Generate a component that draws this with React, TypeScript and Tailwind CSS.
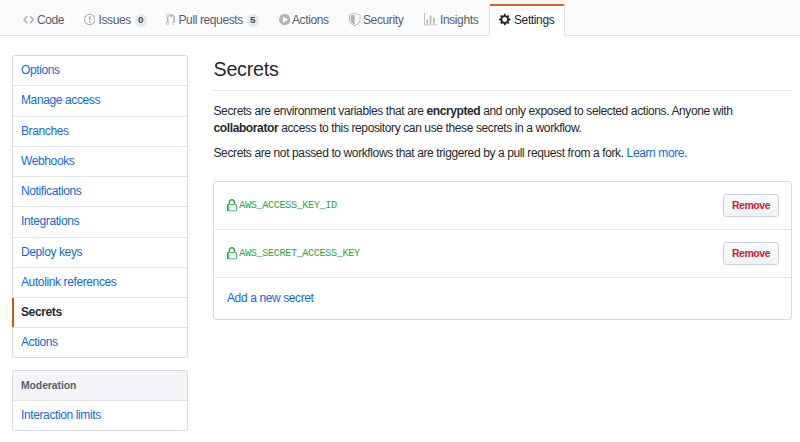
import type { ReactNode } from 'react';

type IconProps = { d: string; w: number; className?: string };

// Octicons share a 16-unit height and vary in width.
function Icon({ d, w, className = '' }: IconProps) {
  return (
    <svg viewBox={`0 0 ${w} 16`} fill="currentColor" fillRule="evenodd" aria-hidden="true" className={`h-[13.1px] shrink-0 ${className}`}>
      <path d={d} />
    </svg>
  );
}

const icons = {
  code: 'M9.5 3L8 4.5 11.5 8 8 11.5 9.5 13 14 8 9.5 3zm-5 0L0 8l4.5 5L6 11.5 2.5 8 6 4.5 4.5 3z',
  issue: 'M7 2.3c3.14 0 5.7 2.56 5.7 5.7s-2.56 5.7-5.7 5.7A5.71 5.71 0 011.3 8c0-3.14 2.56-5.7 5.7-5.7zM7 1C3.14 1 0 4.14 0 8s3.14 7 7 7 7-3.14 7-7-3.14-7-7-7zm1 3H6v5h2V4zm0 6H6v2h2v-2z',
  pull: 'M11 11.28V5c-.03-.78-.34-1.47-.94-2.06C9.46 2.35 8.78 2.03 8 2H7V0L4 3l3 3V4h1c.27.02.48.11.69.31.21.2.3.42.31.69v6.28A1.993 1.993 0 0010 15a1.993 1.993 0 001-3.72zm-1 2.92c-.66 0-1.2-.55-1.2-1.2 0-.65.55-1.2 1.2-1.2.65 0 1.2.55 1.2 1.2 0 .65-.55 1.2-1.2 1.2zM4 3c0-1.11-.89-2-2-2a1.993 1.993 0 00-1 3.72v6.56A1.993 1.993 0 002 15a1.993 1.993 0 001-3.72V4.72c.59-.34 1-.98 1-1.72zm-.8 10c0 .66-.55 1.2-1.2 1.2-.65 0-1.2-.55-1.2-1.2 0-.65.55-1.2 1.2-1.2.65 0 1.2.55 1.2 1.2zM2 4.2C1.34 4.2.8 3.65.8 3c0-.65.55-1.2 1.2-1.2.65 0 1.2.55 1.2 1.2 0 .65-.55 1.2-1.2 1.2z',
  play: 'M14 8A7 7 0 110 8a7 7 0 0114 0zm-8.223 3.482l4.599-3.066a.5.5 0 000-.832L5.777 4.518A.5.5 0 005 4.934v6.132a.5.5 0 00.777.416z',
  shield: 'M0 2l7-2 7 2v6.02C14 12.69 8.69 16 7 16c-1.69 0-7-3.31-7-7.98V2zm1 .75L7 1l6 1.75v5.268C13 12.104 8.449 15 7 15c-1.449 0-6-2.896-6-6.982V2.75zm1 .75L7 2v12c-1.207 0-5-2.482-5-5.985V3.5z',
  graph: 'M16 14v1H0V0h1v14h15zM5 13H3V8h2v5zm4 0H7V3h2v10zm4 0h-2V6h2v7z',
  gear: 'M14 8.77v-1.6l-1.94-.64-.45-1.09.88-1.84-1.13-1.13-1.81.91-1.09-.45-.69-1.92h-1.6l-.63 1.94-1.11.45-1.84-.88-1.13 1.13.91 1.81-.45 1.09L0 7.23v1.59l1.94.64.45 1.09-.88 1.84 1.13 1.13 1.81-.91 1.09.45.69 1.92h1.59l.63-1.94 1.11-.45 1.84.88 1.13-1.13-.92-1.81.47-1.09L14 8.75v.02zM7 11c-1.66 0-3-1.34-3-3s1.34-3 3-3 3 1.34 3 3-1.34 3-3 3z',
  lock: 'M4 13H3v-1h1v1zm8-6v7c0 .55-.45 1-1 1H1c-.55 0-1-.45-1-1V7c0-.55.45-1 1-1h1V4c0-2.2 1.8-4 4-4s4 1.8 4 4v2h1c.55 0 1 .45 1 1zM3.8 6h4.41V4c0-1.22-.98-2.2-2.2-2.2-1.22 0-2.2.98-2.2 2.2v2H3.8zM11 7H2v7h9V7zM4 8H3v1h1V8zm0 2H3v1h1v-1z',
};

const tabs = [
  { label: 'Code', d: icons.code, w: 14, width: 'w-[61px]', icon: 'w-[11.5px] mr-[3px]' },
  { label: 'Issues', d: icons.issue, w: 14, width: 'w-[82px]', icon: 'w-[11.5px] mr-[3.5px]', count: 0 },
  { label: 'Pull requests', d: icons.pull, w: 12, width: 'w-[113px]', icon: 'w-[9.8px] mr-[3.2px]', count: 5 },
  { label: 'Actions', d: icons.play, w: 14, width: 'w-[70.5px]', icon: 'w-[11.5px] mr-[2px]' },
  { label: 'Security', d: icons.shield, w: 14, width: 'w-[75px]', icon: 'w-[11.5px] mr-[2.5px]' },
  { label: 'Insights', d: icons.graph, w: 16, width: 'w-[65px]', icon: 'w-[13.1px] mr-[2.9px]' },
];

const menu = ['Options', 'Manage access', 'Branches', 'Webhooks', 'Notifications', 'Integrations', 'Deploy keys', 'Autolink references', 'Secrets', 'Actions'];

const secrets = ['AWS_ACCESS_KEY_ID', 'AWS_SECRET_ACCESS_KEY'];

function MenuLink({ children, active = false }: { children: ReactNode; active?: boolean }) {
  return (
    <a
      className={
        active
          ? '-ml-px flex h-full items-center border-l-2 border-[#d15704] pl-[7px] font-bold text-[#24292e]'
          : 'flex h-full items-center pl-2 text-[#106ad8]'
      }
    >
      {children}
    </a>
  );
}

export default function App() {
  return (
    <div className="h-[442px] overflow-hidden bg-white font-['Liberation_Sans',Arial,sans-serif] text-[12px] leading-[17px] tracking-[-0.385px] text-[#24292e]">
      <header className="flex h-9 items-end border-b border-[#e1e4e8] bg-[#fafbfc] pl-[22.5px]">
        {tabs.map((t) => (
          <a key={t.label} className={`flex h-[30px] shrink-0 items-center text-[#586069] ${t.width}`}>
            <Icon d={t.d} w={t.w} className={`text-[#b1b4b8] ${t.icon}`} />
            {t.label}
            {t.count !== undefined && (
              <span className="ml-[3.8px] flex h-[13px] w-3 items-center justify-center rounded-full bg-[#e6e8eb] text-[9.8px] leading-none font-bold tracking-normal text-[#444d56]">
                {t.count}
              </span>
            )}
          </a>
        ))}
        <a className="-mb-px flex h-8 w-[76px] shrink-0 items-center rounded-t-[2px] border-x border-t-2 border-x-[#e1e4e8] border-t-[#e36209] bg-white pb-0.5 pl-[9px]">
          <Icon d={icons.gear} w={14} className="mr-[3.5px] w-[11.5px]" />
          Settings
        </a>
      </header>

      <div className="flex pl-3 pr-2">
        <aside className="w-44 shrink-0 pt-[19px]">
          <nav className="rounded-[3px] border border-[#d8dbdf]">
            {menu.map((m) => (
              <div key={m} className="h-[30.25px] border-b border-[#e1e4e8] last:h-[29px] last:border-b-0">
                <MenuLink active={m === 'Secrets'}>{m}</MenuLink>
              </div>
            ))}
          </nav>
          <nav className="mt-3 overflow-hidden rounded-[3px] border border-[#d8dbdf]">
            <h3 className="flex h-[30px] items-center border-b border-[#e1e4e8] bg-[#f3f5f8] pl-2 text-[10.4px] font-bold tracking-[-0.07px] text-[#586069]">Moderation</h3>
            <div className="h-[29px]">
              <MenuLink>Interaction limits</MenuLink>
            </div>
          </nav>
        </aside>

        <main className="ml-[25px] flex-1 pt-[19px]">
          <h2 className="h-9 border-b border-[#e1e4e8] pl-[0.5px] text-[19.7px] leading-7 tracking-[-0.25px]">Secrets</h2>
          <p className="mt-3 pl-[0.5px]">
            Secrets are environment variables that are <strong>encrypted</strong> and only exposed to selected actions. Anyone with
            <br />
            <strong>collaborator</strong> access to this repository can use these secrets in a workflow.
          </p>
          <p className="mt-2 pl-[0.5px]">
            Secrets are not passed to workflows that are triggered by a pull request from a fork. <a className="text-[#106ad8]">Learn more</a>.
          </p>
          <div className="mt-[19px] rounded-[3px] border border-[#d8dbdf]">
            {secrets.map((s) => (
              <div key={s} className="flex h-[47.75px] items-center border-b border-[#e1e4e8] pl-[13px] pr-3 text-[#28a745]">
                <Icon d={icons.lock} w={12} className="mr-[2.5px] w-[9.8px]" />
                <code className="font-['Liberation_Mono',monospace] text-[10.2px] tracking-[-0.38px]">{s}</code>
                <button className="ml-auto h-[23px] w-14 rounded-[3px] border border-[#d0d3d6] bg-linear-to-b from-[#fafbfc] to-[#eff3f6] text-[10.5px] leading-none font-bold tracking-[-0.45px] text-[#cb2431]">
                  Remove
                </button>
              </div>
            ))}
            <div className="flex h-[41.5px] items-center pl-[13px]">
              <a className="text-[#106ad8]">Add a new secret</a>
            </div>
          </div>
        </main>
      </div>
    </div>
  );
}
